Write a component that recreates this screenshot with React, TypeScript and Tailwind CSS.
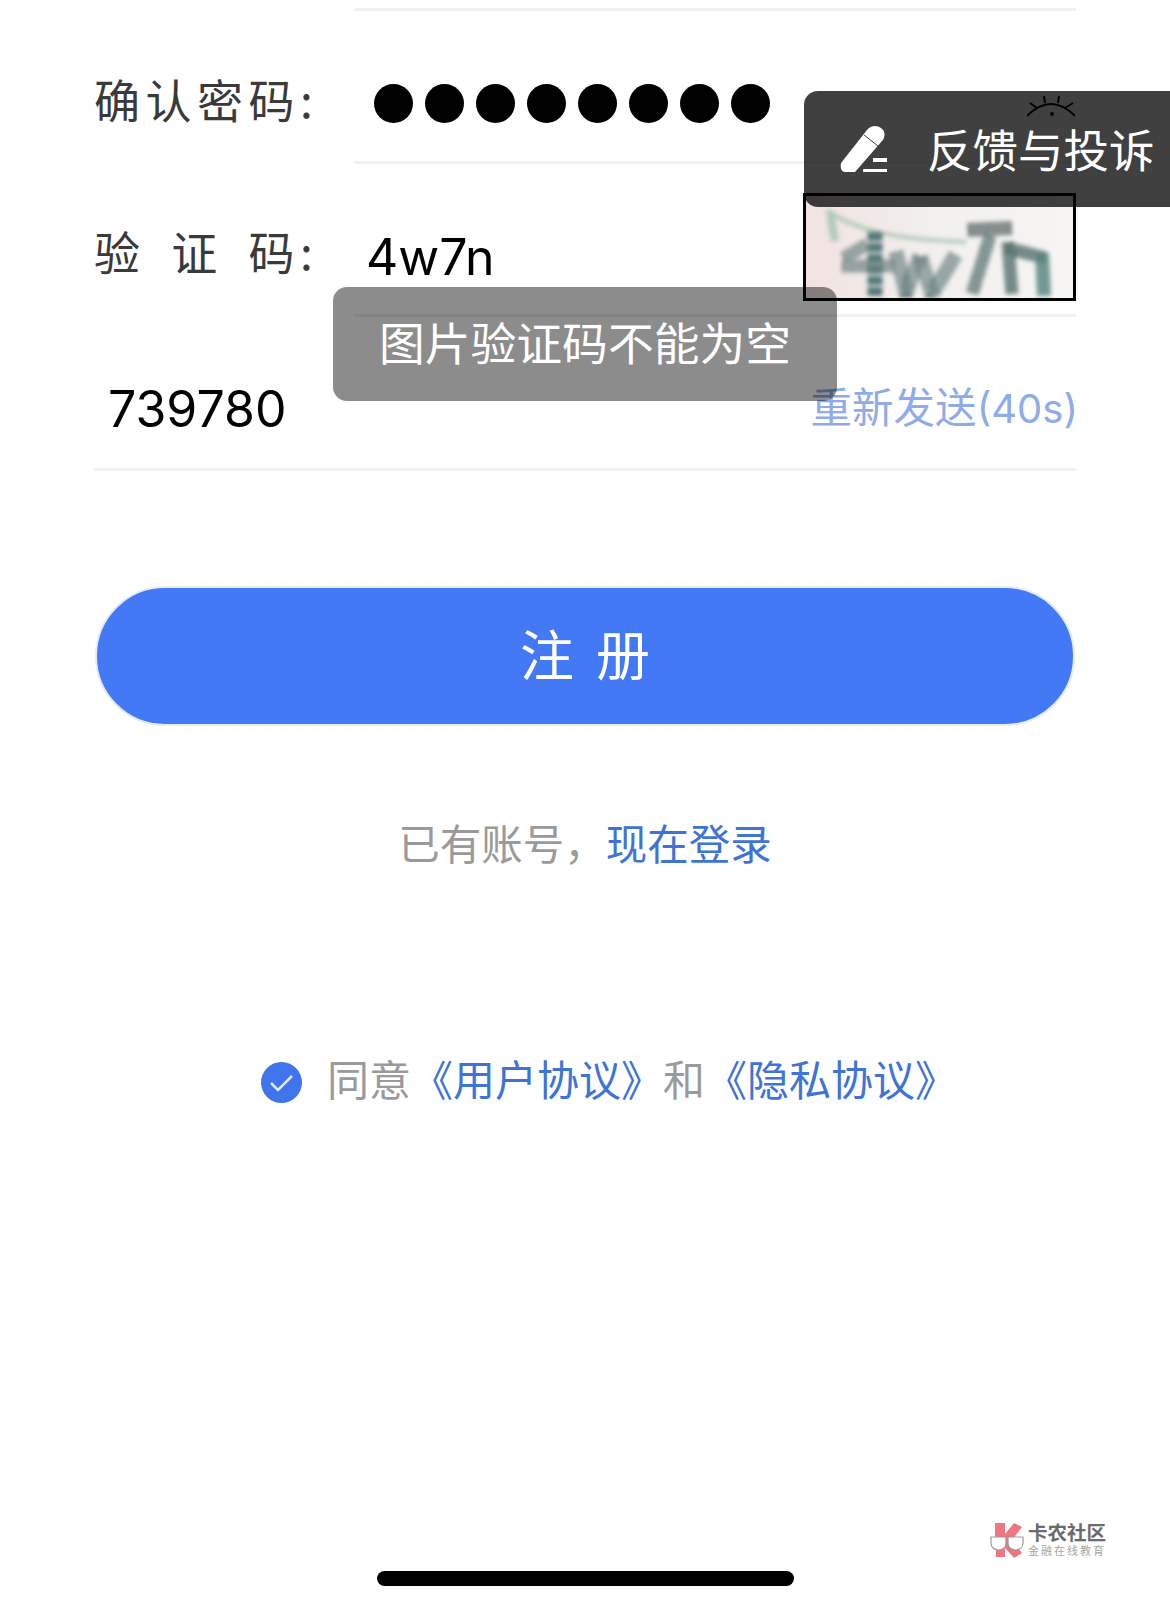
import React from 'react';

const cjk = { fontFamily: '"Noto Sans CJK SC", "Noto Sans", sans-serif' };
const latin = { fontFamily: 'Inter, sans-serif' };
const logoFont = { fontFamily: '"Liberation Sans", "Noto Sans CJK SC", sans-serif' };

const PenIcon = () => (
  <svg width="48" height="48" viewBox="0 0 48 48" fill="none">
    <path d="M1 38 L27 5 C31 0 37 0 41 3 C45 6 46 11 42 16 L15 47 L5 47 C2 47 0 44 1 38 Z" fill="#fff" />
    <path d="M24 10 L38 21" stroke="#404040" strokeWidth="1" />
    <rect x="23" y="44" width="24" height="3" fill="#fff" />
    <rect x="33" y="33" width="14" height="4" fill="#fff" />
  </svg>
);

// closed eye, sits under the feedback panel
const EyeOff = () => (
  <svg width="48" height="24" viewBox="0 0 48 24" fill="none" stroke="#000" strokeWidth="2">
    <path d="M0 22 C8 14 16 10 24 10 C32 10 40 14 48 22" />
    <path d="M17 2 L18 9 M32 2 L31 9 M3 9 L10 14 M46 9 L38 14" />
    <circle cx="25" cy="20" r="2" fill="#000" stroke="none" />
  </svg>
);

const Captcha = () => (
  <div className="mt-[-21px] w-[273px] h-[108px] border-[3px] border-black bg-gradient-to-r from-[#f1e3e1] via-[#f2f0ee] to-[#f6f5f3] overflow-hidden">
    <svg className="blur-[2px]" width="267" height="102" viewBox="0 0 267 102" fill="none">
      <path d="M21 15 C60 40 110 44 160 46" stroke="#b4c8bd" strokeWidth="4" />
      <path d="M24 15 L29 45" stroke="#b0cabd" strokeWidth="8" />
      <path d="M69 36 L69 102" stroke="#55797a" strokeWidth="15" strokeDasharray="9 2" />
      <path d="M38 62 L62 48 M36 70 L90 70" stroke="#68807f" strokeWidth="13" strokeDasharray="3 1.5" />
      <path d="M90 56 L100 96 L114 60 L126 98 L150 58" stroke="#6b8182" strokeWidth="15" strokeDasharray="3 1.5" />
      <path d="M162 34 L206 32" stroke="#4f5c5c" strokeWidth="14" strokeDasharray="3 1.5" />
      <path d="M184 40 L166 98" stroke="#5f7877" strokeWidth="13" strokeDasharray="3 1" />
      <path d="M202 46 L206 98 M200 52 L240 62" stroke="#56716f" strokeWidth="13" strokeDasharray="4 1" />
      <path d="M236 58 L238 100" stroke="#55807d" strokeWidth="14" strokeDasharray="4 1" />
    </svg>
  </div>
);

const Logo = () => (
  <div className="flex items-start gap-[4px]">
    <svg width="34" height="36" viewBox="0 0 34 36">
      <path d="M5 1 H15 V12 L24 1 L32 5 L22 18 L32 31 L24 36 L15 26 V35 H6 V24 H5 Z" fill="#ee7683" />
      <path d="M1 15 H16 V21 C16 26 12 28 8 28 C4 28 1 25 1 21 Z" fill="#fff" stroke="#9a9a9a" strokeWidth="1.2" />
      <path d="M18 15 H33 V21 C33 26 29 28 25 28 C21 28 18 25 18 21 Z" fill="#fff" stroke="#9a9a9a" strokeWidth="1.2" />
    </svg>
    <div className="flex flex-col items-start" style={logoFont}>
      <span className="text-[19.5px] leading-[22px] font-bold text-[#6b6b6b] whitespace-nowrap">卡农社区</span>
      <span className="text-[11px] leading-[14px] text-[#a5a5a5] tracking-[2px] whitespace-nowrap">金融在线教育</span>
    </div>
  </div>
);

export default function App() {
  return (
    <div className="relative w-[1170px] h-[1609px] bg-white overflow-hidden" style={cjk}>
      <div className="h-[11px] ml-[354px] mr-[94px] border-b-[3px] border-[#f1f1f1]" />

      <div className="h-[153px] mx-[94px] flex">
        <span className="w-[260px] shrink-0 self-center pt-[21px] text-[46px] font-normal tracking-[5.5px] text-[#3a3a3a]">确认密码:</span>
        <div className="flex-1 h-full flex items-center justify-between pt-[35px] border-b-[3px] border-[#f1f1f1]">
          <div className="flex gap-[12px] ml-[20px]">
            {Array.from({ length: 8 }).map((_, i) => (
              <span key={i} className="w-[39px] h-[39px] rounded-full bg-black" />
            ))}
          </div>
          <div className="mr-[1px] mt-[4px]">
            <EyeOff />
          </div>
        </div>
      </div>

      <div className="h-[153px] mx-[94px] flex">
        <span className="w-[260px] shrink-0 self-center pt-[19px] text-[46px] font-normal tracking-[5.5px] [word-spacing:10px] text-[#3a3a3a]">验 证 码:</span>
        <div className="flex-1 h-full flex items-center justify-between pt-[37px] border-b-[3px] border-[#f1f1f1]">
          <span className="ml-[12px] text-[50px] text-black" style={latin}>4w7n</span>
          <Captcha />
        </div>
      </div>

      <div className="h-[154px] mx-[94px] flex items-center justify-between border-b-[3px] border-[#f1f1f1]">
        <span className="ml-[14px] pt-[33px] text-[50px] text-black" style={latin}>739780</span>
        <span className="mr-[-2px] pt-[27px] text-[41.5px] text-[#8fabe8] whitespace-nowrap">
          重新发送<span className="text-[40px]" style={latin}>(40s)</span>
        </span>
      </div>

      <div className="mt-[115px] mx-[95px] h-[140px] rounded-full bg-[#4479f5] border-[2px] border-[#e6ecf7] flex items-center justify-center">
        <span className="pb-[8px] ml-[22px] text-[54px] text-white tracking-[22px]">注册</span>
      </div>

      <p className="mt-[91px] text-center text-[41.5px] leading-[50px] text-[#9a9a9a]">
        已有账号{'\uFF0C'}<span className="text-[#3f74d6]">现在登录</span>
      </p>

      <div className="mt-[186px] pl-[48px] flex items-center justify-center">
        <svg className="mt-[8px] mr-[25px]" width="41" height="41" viewBox="0 0 41 41">
          <circle cx="20.5" cy="20.5" r="20.5" fill="#3f74ec" />
          <path d="M10 21 L17 28 L31 14" fill="none" stroke="#dfe8fb" strokeWidth="2.5" />
        </svg>
        <p className="text-[42px] leading-[50px] text-[#9a9a9a]">
          同意<span className="text-[#3f74d6]">《用户协议》</span>和<span className="text-[#3f74d6]">《隐私协议》</span>
        </p>
      </div>

      {/* overlays */}
      <div className="absolute left-[804px] top-[91px] w-[366px] h-[116px] rounded-l-[14px] bg-black/75 flex items-center pl-[36px]">
        <PenIcon />
        <span className="ml-[39px] pb-[2px] text-[45.5px] text-white whitespace-nowrap">反馈与投诉</span>
      </div>
      <div className="absolute left-[333px] top-[287px] w-[504px] h-[114px] rounded-[14px] bg-black/45 flex items-center justify-center">
        <span className="pb-[6px] text-[45.8px] text-white whitespace-nowrap">图片验证码不能为空</span>
      </div>
      <div className="absolute left-[990px] top-[1522px]">
        <Logo />
      </div>
      <div className="absolute left-[377px] top-[1571px] w-[417px] h-[15px] rounded-full bg-black" />
    </div>
  );
}
